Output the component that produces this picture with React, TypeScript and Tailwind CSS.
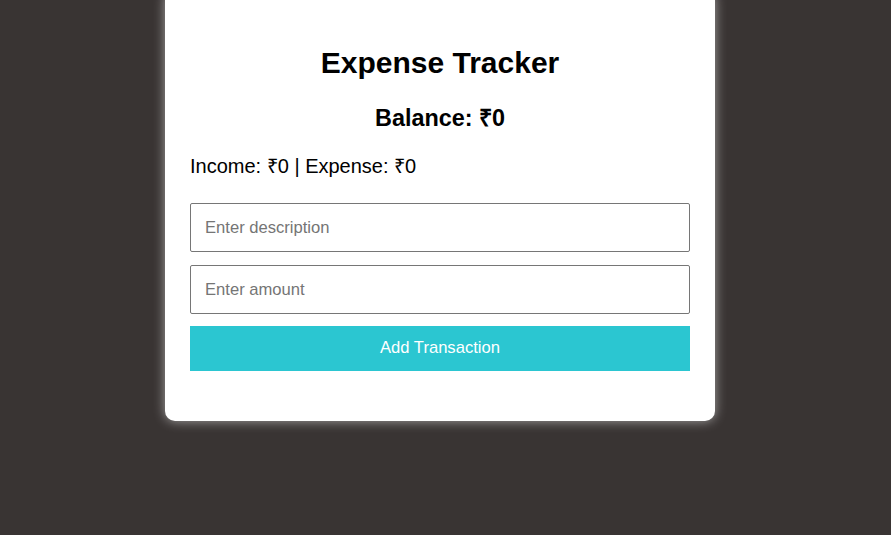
import React from "react";

export default function App() {
  return (
    <div
      className="w-full h-[535px] overflow-hidden bg-[#393433] flex justify-center pr-[11px]"
      style={{ fontFamily: '"Liberation Sans", Arial, sans-serif' }}
    >
      <div className="w-[550px] shrink-0 mt-[-10px] h-[431px] bg-white rounded-[10px] shadow-[0_0_12px_rgba(255,255,255,0.55)] px-[25px] pt-[56px] flex flex-col">
        <h1 className="text-[30px] leading-[34px] font-bold text-black text-center">
          Expense Tracker
        </h1>
        <h2 className="mt-[24px] text-[23.4px] leading-[28px] font-bold text-black text-center">
          Balance: ₹0
        </h2>
        <p className="mt-[22px] text-[20px] leading-[24px] text-black">
          Income: ₹0 | Expense: ₹0
        </p>
        <input
          type="text"
          placeholder="Enter description"
          className="mt-[25px] h-[49px] w-full border border-[#767676] rounded-[2px] px-[14px] text-[16.6px] text-black placeholder:text-[#757575] outline-none"
        />
        <input
          type="number"
          placeholder="Enter amount"
          className="mt-[13px] h-[49px] w-full border border-[#767676] rounded-[2px] px-[14px] text-[16.6px] text-black placeholder:text-[#757575] outline-none"
        />
        <button className="mt-[12px] h-[45px] w-full bg-[#2bc6d1] text-white text-[16.6px]">
          Add Transaction
        </button>
      </div>
    </div>
  );
}
